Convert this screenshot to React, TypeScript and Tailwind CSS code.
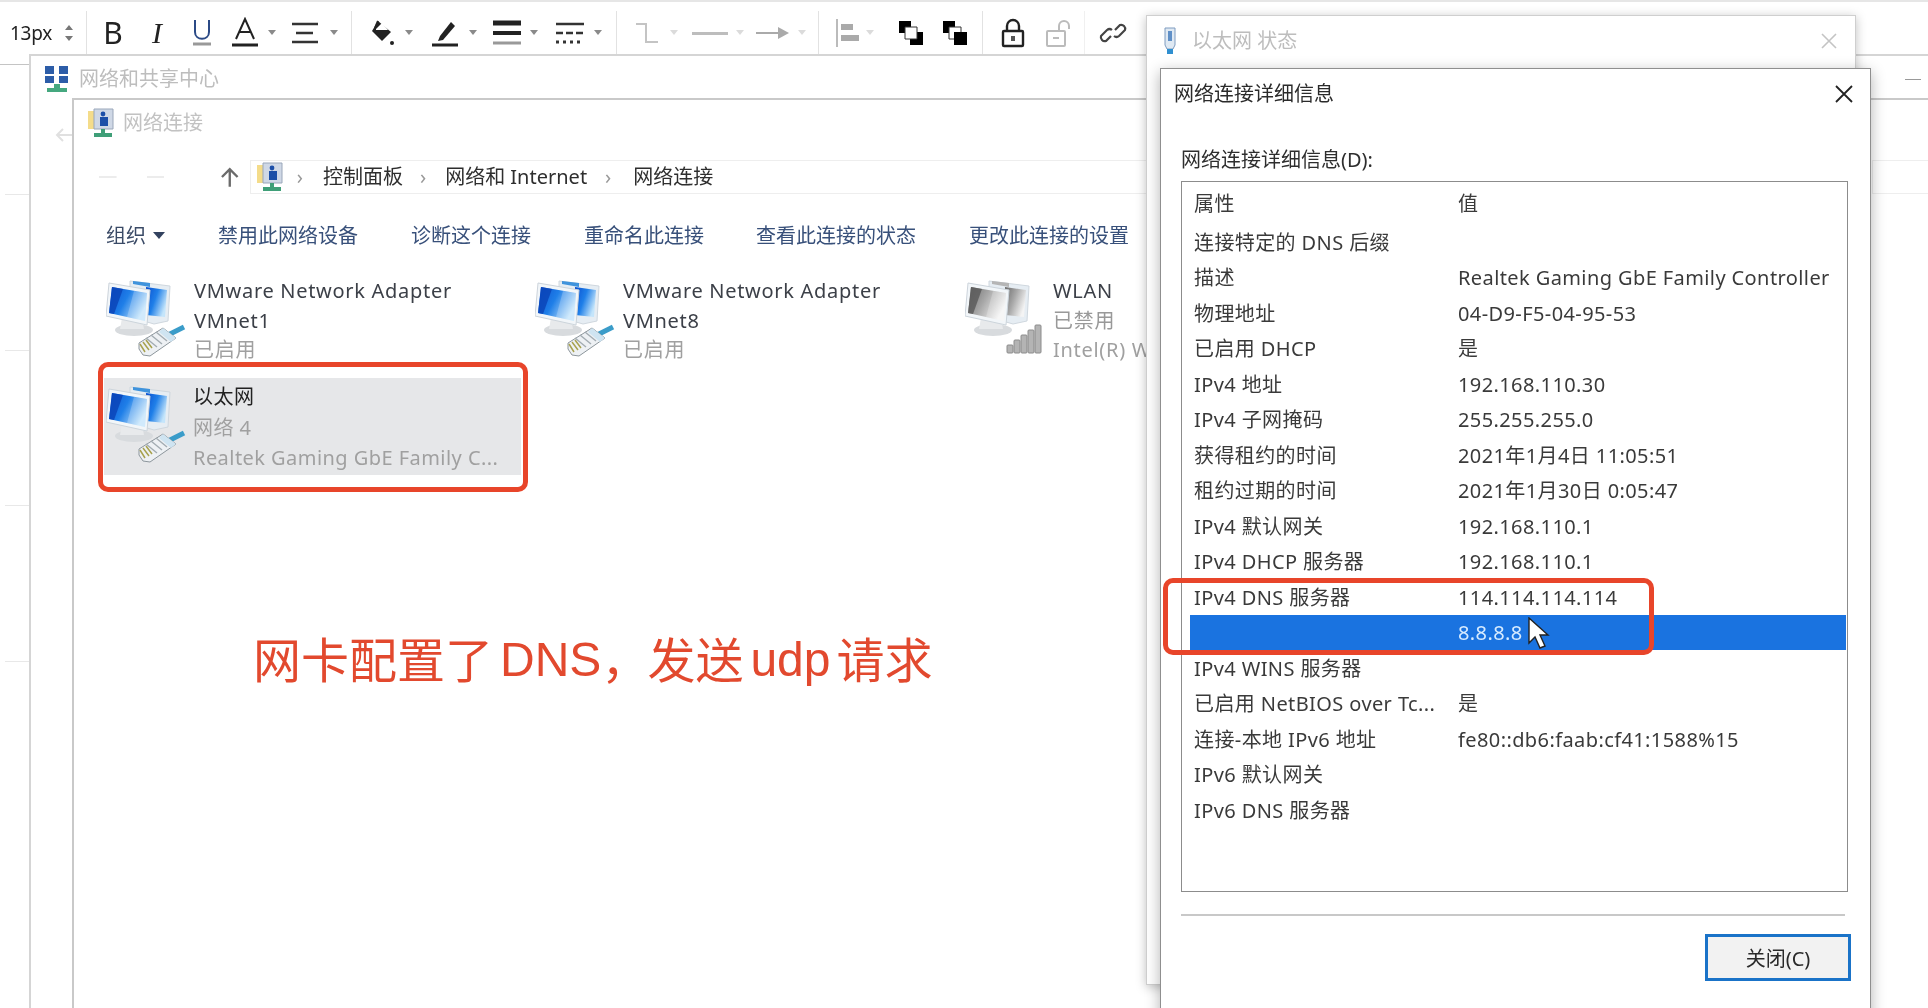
const rows: [string, string][] = [
  ["连接特定的 DNS 后缀", ""],
  ["描述", "Realtek Gaming GbE Family Controller"],
  ["物理地址", "04-D9-F5-04-95-53"],
  ["已启用 DHCP", "是"],
  ["IPv4 地址", "192.168.110.30"],
  ["IPv4 子网掩码", "255.255.255.0"],
  ["获得租约的时间", "2021年1月4日 11:05:51"],
  ["租约过期的时间", "2021年1月30日 0:05:47"],
  ["IPv4 默认网关", "192.168.110.1"],
  ["IPv4 DHCP 服务器", "192.168.110.1"],
  ["IPv4 DNS 服务器", "114.114.114.114"],
  ["", "8.8.8.8"],
  ["IPv4 WINS 服务器", ""],
  ["已启用 NetBIOS over Tc...", "是"],
  ["连接-本地 IPv6 地址", "fe80::db6:faab:cf41:1588%15"],
  ["IPv6 默认网关", ""],
  ["IPv6 DNS 服务器", ""],
];

function Caret({ className = "" }: { className?: string }) {
  return (
    <svg width="10" height="6" viewBox="0 0 10 6" className={`shrink-0 ${className}`}>
      <path d="M1 0h8L5 5z" fill="#8a8a8a" />
    </svg>
  );
}

function Divider({ className = "" }: { className?: string }) {
  return <div className={`h-[44px] w-px shrink-0 bg-[#e2e2e2] ${className}`} />;
}

function Toolbar() {
  return (
    <div className="flex h-[54px] items-center border-t-2 border-[#e6e6e6] bg-white pt-[10px] text-[#222]">
      <span className="ml-[10px] w-[46px] text-[19px] tracking-[-0.3px]">13px</span>
      <svg width="10" height="20" viewBox="0 0 10 20" className="ml-[8px]">
        <path d="M5 2l4 5H1zM5 18l4-5H1z" fill="#777" />
      </svg>
      <Divider className="ml-[12px]" />
      <span className="ml-[14px] w-[24px] text-center text-[30px] leading-none text-[#222]">B</span>
      <span className="ml-[20px] w-[24px] text-center font-['Liberation_Serif',serif] text-[30px] italic leading-none">I</span>
      <svg width="24" height="30" viewBox="0 0 24 30" className="ml-[21px]">
        <path d="M5 2v12c0 9 14 9 14 0V2" fill="none" stroke="#2b4a86" strokeWidth="2" />
        <path d="M3 26h18" stroke="#999" strokeWidth="3" />
      </svg>
      <svg width="28" height="32" viewBox="0 0 28 32" className="ml-[17px]">
        <path d="M5 22L14 2l9 20M8 15h12" fill="none" stroke="#222" strokeWidth="2" />
        <path d="M1 28h26" stroke="#222" strokeWidth="3" />
      </svg>
      <Caret className="ml-[8px]" />
      <svg width="28" height="24" viewBox="0 0 28 24" className="ml-[14px]">
        <path d="M1 3h26M5 12h17M1 21h26" stroke="#333" strokeWidth="2.4" />
      </svg>
      <Caret className="ml-[10px]" />
      <Divider className="ml-[12px]" />
      <svg width="24" height="28" viewBox="0 0 24 28" className="ml-[18px]">
        <path d="M8 2l13 11-9 9L2 12z" fill="#222" />
        <path d="M6 10l6-6 6 7H6z" fill="#fff" />
        <path d="M5 9l3-7" stroke="#222" strokeWidth="2" />
        <circle cx="22" cy="24" r="2" fill="#222" />
      </svg>
      <Caret className="ml-[10px]" />
      <svg width="28" height="30" viewBox="0 0 28 30" className="ml-[17px]">
        <path d="M9 18L20 4l4 4-12 14-5 1z" fill="#222" />
        <path d="M1 27h26" stroke="#222" strokeWidth="3" />
      </svg>
      <Caret className="ml-[9px]" />
      <svg width="28" height="26" viewBox="0 0 28 26" className="ml-[15px]">
        <path d="M0 3h28" stroke="#222" strokeWidth="5" />
        <path d="M0 13h28" stroke="#222" strokeWidth="4" />
        <path d="M0 23h28" stroke="#999" strokeWidth="3" />
      </svg>
      <Caret className="ml-[8px]" />
      <svg width="28" height="24" viewBox="0 0 28 24" className="ml-[17px]">
        <path d="M0 3h28" stroke="#333" strokeWidth="2.5" />
        <path d="M0 12h28" stroke="#333" strokeWidth="2.5" strokeDasharray="7 3" />
        <path d="M0 21h28" stroke="#333" strokeWidth="3" strokeDasharray="3 4" />
      </svg>
      <Caret className="ml-[9px]" />
      <Divider className="ml-[13px]" />
      <svg width="26" height="24" viewBox="0 0 26 24" className="ml-[17px]">
        <path d="M2 3h10v18h12" fill="none" stroke="#c4c4c4" strokeWidth="2" />
      </svg>
      <Caret className="ml-[9px] opacity-30" />
      <div className="ml-[13px] h-[3px] w-[36px] shrink-0 bg-[#bdbdbd]" />
      <Caret className="ml-[7px] opacity-30" />
      <svg width="34" height="14" viewBox="0 0 34 14" className="ml-[11px]">
        <path d="M0 7h24" stroke="#aaa" strokeWidth="2" />
        <path d="M22 1l11 6-11 6z" fill="#aaa" />
      </svg>
      <Caret className="ml-[7px] opacity-30" />
      <Divider className="ml-[11px]" />
      <svg width="24" height="28" viewBox="0 0 24 28" className="ml-[17px]">
        <path d="M1 0v28" stroke="#bbb" strokeWidth="2" />
        <path d="M5 5h12v6H5zM5 16h18v6H5z" fill="#aaa" />
      </svg>
      <Caret className="ml-[5px] opacity-30" />
      <svg width="26" height="26" viewBox="0 0 26 26" className="ml-[23px]">
        <path d="M1 1h12v12H1z" fill="#000" />
        <path d="M12 12h13v13H12z" fill="#000" />
        <path d="M7 7h12v12H7z" fill="#fff" stroke="#333" />
      </svg>
      <svg width="26" height="26" viewBox="0 0 26 26" className="ml-[18px]">
        <path d="M1 1h12v12H1z" fill="#000" />
        <path d="M7 7h12v12H7z" fill="#fff" stroke="#333" />
        <path d="M12 12h13v13H12z" fill="#000" />
      </svg>
      <Divider className="ml-[14px]" />
      <svg width="24" height="30" viewBox="0 0 24 30" className="ml-[18px]">
        <path d="M6 13V8a6 6 0 0112 0v5" fill="none" stroke="#222" strokeWidth="2.4" />
        <rect x="2" y="13" width="20" height="15" rx="1" fill="none" stroke="#222" strokeWidth="2.4" />
        <rect x="10" y="18" width="4" height="5" fill="#555" />
      </svg>
      <svg width="24" height="30" viewBox="0 0 24 30" className="ml-[21px]">
        <path d="M13 13V8a5 5 0 0110 0v3" fill="none" stroke="#bbb" strokeWidth="2" />
        <rect x="1" y="13" width="18" height="15" rx="1" fill="none" stroke="#bbb" strokeWidth="2" />
        <path d="M7 20h6" stroke="#bbb" strokeWidth="2" />
      </svg>
      <Divider className="ml-[14px] opacity-50" />
      <svg width="28" height="30" viewBox="0 0 28 30" className="ml-[14px]">
        <path d="M12 18l-5 5a4 4 0 01-5-5l6-6a4 4 0 015 0M16 12l5-5a4 4 0 015 5l-6 6a4 4 0 01-5 0" fill="none" stroke="#444" strokeWidth="2.2" />
      </svg>
    </div>
  );
}

function NetIcon({ id, gray, wifi }: { id: string; gray?: boolean; wifi?: boolean }) {
  const hi = gray ? "#6a6a6a" : "#0a4fd0";
  const mid = gray ? "#a8a8a8" : "#1f7fe8";
  const lo = gray ? "#f4f4f4" : "#c4e5fb";
  return (
    <svg width="80" height="80" viewBox="0 0 80 80" className="shrink-0">
      <defs>
        <linearGradient id={id} x1="0" y1="0" x2="1" y2="0.5">
          <stop offset="0" stopColor={hi} />
          <stop offset="0.5" stopColor={mid} />
          <stop offset="1" stopColor={lo} />
        </linearGradient>
      </defs>
      {/* back monitor */}
      <path d="M24 1l40 5-2 35-14 3-24-7z" fill="#e6edf3" stroke="#cfd7de" />
      <path d="M40 7l21 3-2 27-19-2z" fill={`url(#${id})`} />
      <path d="M27 1l17 2v4L27 4z" fill={gray ? "#b5b5b5" : "#3f93dc"} />
      {/* stand */}
      <ellipse cx="28" cy="50" rx="19" ry="6" fill="#d8dbde" />
      <path d="M16 38h20l2 11H14z" fill="#e8eaec" />
      {/* front monitor */}
      <path d="M3 3l41 7-3 35L0 36z" fill="#f2f6f9" stroke="#ccd4db" />
      <path d="M6 7l35 6-2 28L3 33z" fill={`url(#${id})`} />
      <path d="M6 7l11 2-9 25-5-1z" fill={gray ? "#5c5c5c" : "#0a45b8"} opacity="0.85" />
      <path d="M41 13l-2 28-18-4 7-26z" fill="#fff" opacity="0.22" />
      {wifi ? (
        <g fill="#b4b4b4" stroke="#8c8c8c">
          <rect x="42" y="65" width="6" height="8" rx="1" />
          <rect x="49" y="60" width="6" height="13" rx="1" />
          <rect x="56" y="55" width="6" height="18" rx="1" />
          <rect x="63" y="50" width="6" height="23" rx="1" />
          <rect x="70" y="45" width="6" height="28" rx="1" />
        </g>
      ) : (
        <g>
          <path d="M62 55l16-8" stroke="#3a9cc9" strokeWidth="5" />
          <path d="M33 63l24-15 13 10-26 18-7-1-4-6z" fill="#eef1f4" stroke="#8d969c" />
          <path d="M40 58l11 9M45 55l11 9M50 52l11 9" stroke="#a3acb2" strokeWidth="1.4" />
          <path d="M57 48l13 10-5 4-12-10z" fill="#cfe4f1" />
          <path d="M34 64l5 8M37 62l6 8M40 60l6 8" stroke="#a8a24e" strokeWidth="1.5" />
        </g>
      )}
    </svg>
  );
}

function ConnectIcon({ className = "" }: { className?: string }) {
  return (
    <svg width="26" height="30" viewBox="0 0 26 30" className={`shrink-0 ${className}`}>
      <path d="M0 3h10v18H0z" fill="#f4dc8a" />
      <path d="M6 1h19v20H6z" fill="#cfd8e6" stroke="#9aa7ba" />
      <path d="M12 9h8v9h-8z" fill="#1c4fa8" />
      <circle cx="15" cy="6" r="2.4" fill="#1c4fa8" />
      <path d="M13 21h4v4h-4z" fill="#3f9f78" />
      <path d="M6 25h18v4H6z" fill="#3f9f78" />
    </svg>
  );
}

function Adapter({
  id,
  gray,
  wifi,
  lines,
  width,
}: {
  id: string;
  gray?: boolean;
  wifi?: boolean;
  lines: [string, string, string];
  width: string;
}) {
  return (
    <div className={`flex h-[94px] items-start ${width}`}>
      <div className="pt-[5px]">
        <NetIcon id={id} gray={gray} wifi={wifi} />
      </div>
      <div className="ml-[8px] mt-[1px] min-w-0 whitespace-nowrap text-[20px] leading-[29.5px] tracking-[0.7px]">
        <div className="text-[#3c4048]">{lines[0]}</div>
        <div className={wifi ? "text-[#999]" : "text-[#3c4048]"}>{lines[1]}</div>
        <div className="text-[#a0a0a0]">{lines[2]}</div>
      </div>
    </div>
  );
}

export default function App() {
  return (
    <div className="relative h-[1008px] w-[1928px] overflow-hidden bg-white font-['Noto_Sans','Noto_Sans_CJK_SC',sans-serif] blur-[0.5px]">
      <Toolbar />

      {/* canvas grid lines showing left of the windows */}
      <div className="flex w-[29px] flex-col items-end">
        <div className="mt-[10px] h-px w-full bg-[#c4c4c4]" />
        <div className="mt-[129px] h-px w-[24px] bg-[#e8e8e8]" />
        <div className="mt-[155px] h-px w-[24px] bg-[#e8e8e8]" />
        <div className="mt-[154px] h-px w-[24px] bg-[#e8e8e8]" />
        <div className="mt-[155px] h-px w-[24px] bg-[#e8e8e8]" />
      </div>

      {/* network and sharing centre, behind everything */}
      <div className="absolute left-[29px] top-[54px] h-[960px] w-[1900px] border-l-2 border-t-2 border-[#d5d5d5] bg-white">
        <div className="flex h-[46px] items-center pl-[13px]">
          <svg width="26" height="28" viewBox="0 0 26 28">
            <path d="M1 1h9v8H1zM15 1h9v8h-9zM1 11h9v7H1zM15 11h9v7h-9z" fill="#2d5da8" />
            <path d="M10 19h6v4h-6z" fill="#45a87f" />
            <path d="M3 23h20v4H3z" fill="#45a87f" />
          </svg>
          <span className="ml-[9px] text-[20px] text-[#bdbdbd]">网络和共享中心</span>
          <span className="ml-auto mr-[8px] h-px w-[16px] bg-[#999]" />
        </div>
        <svg width="18" height="14" viewBox="0 0 18 14" className="ml-[24px] mt-[26px]">
          <path d="M17 7H2M8 1L2 7l6 6" fill="none" stroke="#e0e0e0" strokeWidth="2" />
        </svg>
      </div>

      {/* network connections */}
      <div className="absolute left-[72px] top-[98px] h-[920px] w-[1860px] border-l-2 border-t-2 border-[#c9c9c9] bg-white">
        <div className="flex h-[46px] items-center pl-[14px]">
          <ConnectIcon />
          <span className="ml-[9px] text-[20px] text-[#c2c2c2]">网络连接</span>
        </div>
        <div className="mt-[14px] flex h-[34px] items-center">
          <svg width="18" height="6" viewBox="0 0 18 6" className="ml-[25px]">
            <path d="M0 3h18" stroke="#ececec" strokeWidth="2" />
          </svg>
          <svg width="18" height="6" viewBox="0 0 18 6" className="ml-[30px]">
            <path d="M0 3h18" stroke="#ececec" strokeWidth="2" />
          </svg>
          <svg width="22" height="22" viewBox="0 0 22 22" className="ml-[55px]">
            <path d="M11 21V3M3 11l8-8 8 8" fill="none" stroke="#6b6b6b" strokeWidth="2.4" />
          </svg>
          <div className="ml-[9px] flex h-[34px] w-[1637px] items-center border border-[#eeeeee] pl-[6px] text-[20px] text-[#2e2e2e]">
            <ConnectIcon />
            <span className="ml-[14px] text-[#999]">›</span>
            <span className="ml-[20px]">控制面板</span>
            <span className="ml-[17px] text-[#999]">›</span>
            <span className="ml-[19px]">网络和 Internet</span>
            <span className="ml-[18px] text-[#999]">›</span>
            <span className="ml-[22px]">网络连接</span>
            <svg width="20" height="22" viewBox="0 0 20 22" className="ml-auto mr-[3px]">
              <path d="M10 5a7.5 7.5 0 11-7 5M10 1v7L6 4z" fill="none" stroke="#9a9a9a" strokeWidth="2" />
            </svg>
          </div>
          <div className="ml-[21px] h-[34px] w-[60px] shrink-0 border border-[#eeeeee]" />
        </div>
        <div className="ml-[32px] mt-[27px] flex h-[30px] items-center whitespace-nowrap text-[20px] text-[#38507a]">
          <span className="text-[#3a4a66]">组织</span>
          <svg width="12" height="8" viewBox="0 0 12 8" className="ml-[7px]">
            <path d="M0 0h12L6 7z" fill="#33425f" />
          </svg>
          <span className="ml-[53px]">禁用此网络设备</span>
          <span className="ml-[53px]">诊断这个连接</span>
          <span className="ml-[53px]">重命名此连接</span>
          <span className="ml-[52px]">查看此连接的状态</span>
          <span className="ml-[53px]">更改此连接的设置</span>
        </div>
        <div className="ml-[32px] mt-[24px] flex">
          <Adapter id="n1" width="w-[429px]" lines={["VMware Network Adapter", "VMnet1", "已启用"]} />
          <Adapter id="n2" width="w-[430px]" lines={["VMware Network Adapter", "VMnet8", "已启用"]} />
          <Adapter id="n3" gray wifi width="w-[200px]" lines={["WLAN", "已禁用", "Intel(R) W"]} />
        </div>
        <div className="ml-[30px] mt-[9px] flex h-[97px] w-[417px] items-start bg-[#e6e7e9]">
          <div className="ml-[2px] pt-[8px]">
            <NetIcon id="n4" />
          </div>
          <div className="ml-[7px] mt-[4px] whitespace-nowrap text-[20px] leading-[30.5px] tracking-[0.45px]">
            <div className="text-[#222]">以太网</div>
            <div className="text-[#a0a0a0]">网络 4</div>
            <div className="text-[#a0a0a0]">Realtek Gaming GbE Family C...</div>
          </div>
        </div>
      </div>

      <div className="absolute left-[98px] top-[362px] h-[130px] w-[430px] rounded-[10px] border-[5px] border-[#e8452a]" />

      <div className="absolute left-[253px] top-[628px] flex whitespace-nowrap text-[48px] leading-[64px] text-[#e2492e]">
        <span>网卡配置了</span>
        <span className="ml-[7px] font-['Liberation_Sans',sans-serif]">DNS</span>
        <span>，</span>
        <span className="ml-[-2px]">发送</span>
        <span className="ml-[7px] font-['Liberation_Sans',sans-serif]">udp</span>
        <span className="ml-[6px]">请求</span>
      </div>

      {/* status window behind the details dialog */}
      <div className="absolute left-[1146px] top-[15px] h-[970px] w-[710px] border border-[#cfcfcf] bg-white shadow-[0_2px_10px_rgba(0,0,0,0.25)]">
        <div className="flex h-[50px] items-center pl-[14px]">
          <svg width="18" height="28" viewBox="0 0 18 28">
            <path d="M4 1h10v17l-2 4H6l-2-4z" fill="#dfe9f3" stroke="#7f9cc0" />
            <path d="M7 4h4v10H7z" fill="#5f8fc7" />
            <path d="M6 22h6v5H6z" fill="#2f8fd0" />
          </svg>
          <span className="ml-[13px] text-[20px] text-[#bdbdbd]">以太网 状态</span>
          <svg width="18" height="18" viewBox="0 0 18 18" className="ml-auto mr-[17px]">
            <path d="M2 2l14 14M16 2L2 16" stroke="#c4c4c4" strokeWidth="1.6" />
          </svg>
        </div>
      </div>

      {/* details dialog */}
      <div className="absolute left-[1160px] top-[68px] h-[960px] w-[711px] border border-[#8f8f8f] bg-white pl-[20px] pr-[22px] shadow-[0_4px_14px_rgba(0,0,0,0.3)]">
        <div className="-ml-[7px] flex h-[50px] items-center">
          <span className="text-[20px] text-[#2a2a2a]">网络连接详细信息</span>
          <svg width="20" height="20" viewBox="0 0 20 20" className="ml-auto mr-[-6px]">
            <path d="M2 2l16 16M18 2L2 18" stroke="#222" strokeWidth="1.8" />
          </svg>
        </div>
        <div className="mt-[26px] h-[36px] text-[20px] leading-[30px] text-[#2e2e2e]">网络连接详细信息(D):</div>
        <div className="h-[711px] w-[667px] border border-[#8c8c8c] pl-[8px] pr-px text-[20px] tracking-[0.4px] text-[#3a3a3a]">
          <div className="flex h-[42px] items-center pl-[4px] pt-[2px]">
            <span className="w-[264px]">属性</span>
            <span>值</span>
          </div>
          {rows.map(([k, v], i) => (
            <div
              key={i}
              className={`flex h-[35.5px] items-center whitespace-nowrap pl-[4px] pt-[2px] ${i === 11 ? "bg-[#1a73e0] text-[#d6ebff]" : ""}`}
            >
              <span className="w-[264px] shrink-0">{k}</span>
              <span>{v}</span>
            </div>
          ))}
        </div>
        <div className="mt-[22px] h-[2px] w-[664px] bg-[#c8c8c8]" />
        <div className="mt-[18px] flex justify-end">
          <div className="mr-[-3px] flex h-[47px] w-[146px] items-center justify-center border-[3px] border-[#1a73c8] bg-[#f2f2f2] pt-[2px] text-[20px] text-[#2a2a2a]">
            关闭(C)
          </div>
        </div>
      </div>

      <div className="absolute left-[1163px] top-[578px] h-[77px] w-[491px] rounded-[10px] border-[5px] border-[#e8452a]" />

      <svg width="22" height="32" viewBox="0 0 22 32" className="absolute left-[1528px] top-[617px]">
        <path d="M1 1v25l6-6 5 11 5-2-5-11h8z" fill="#fff" stroke="#222" strokeWidth="1.4" />
      </svg>
    </div>
  );
}
